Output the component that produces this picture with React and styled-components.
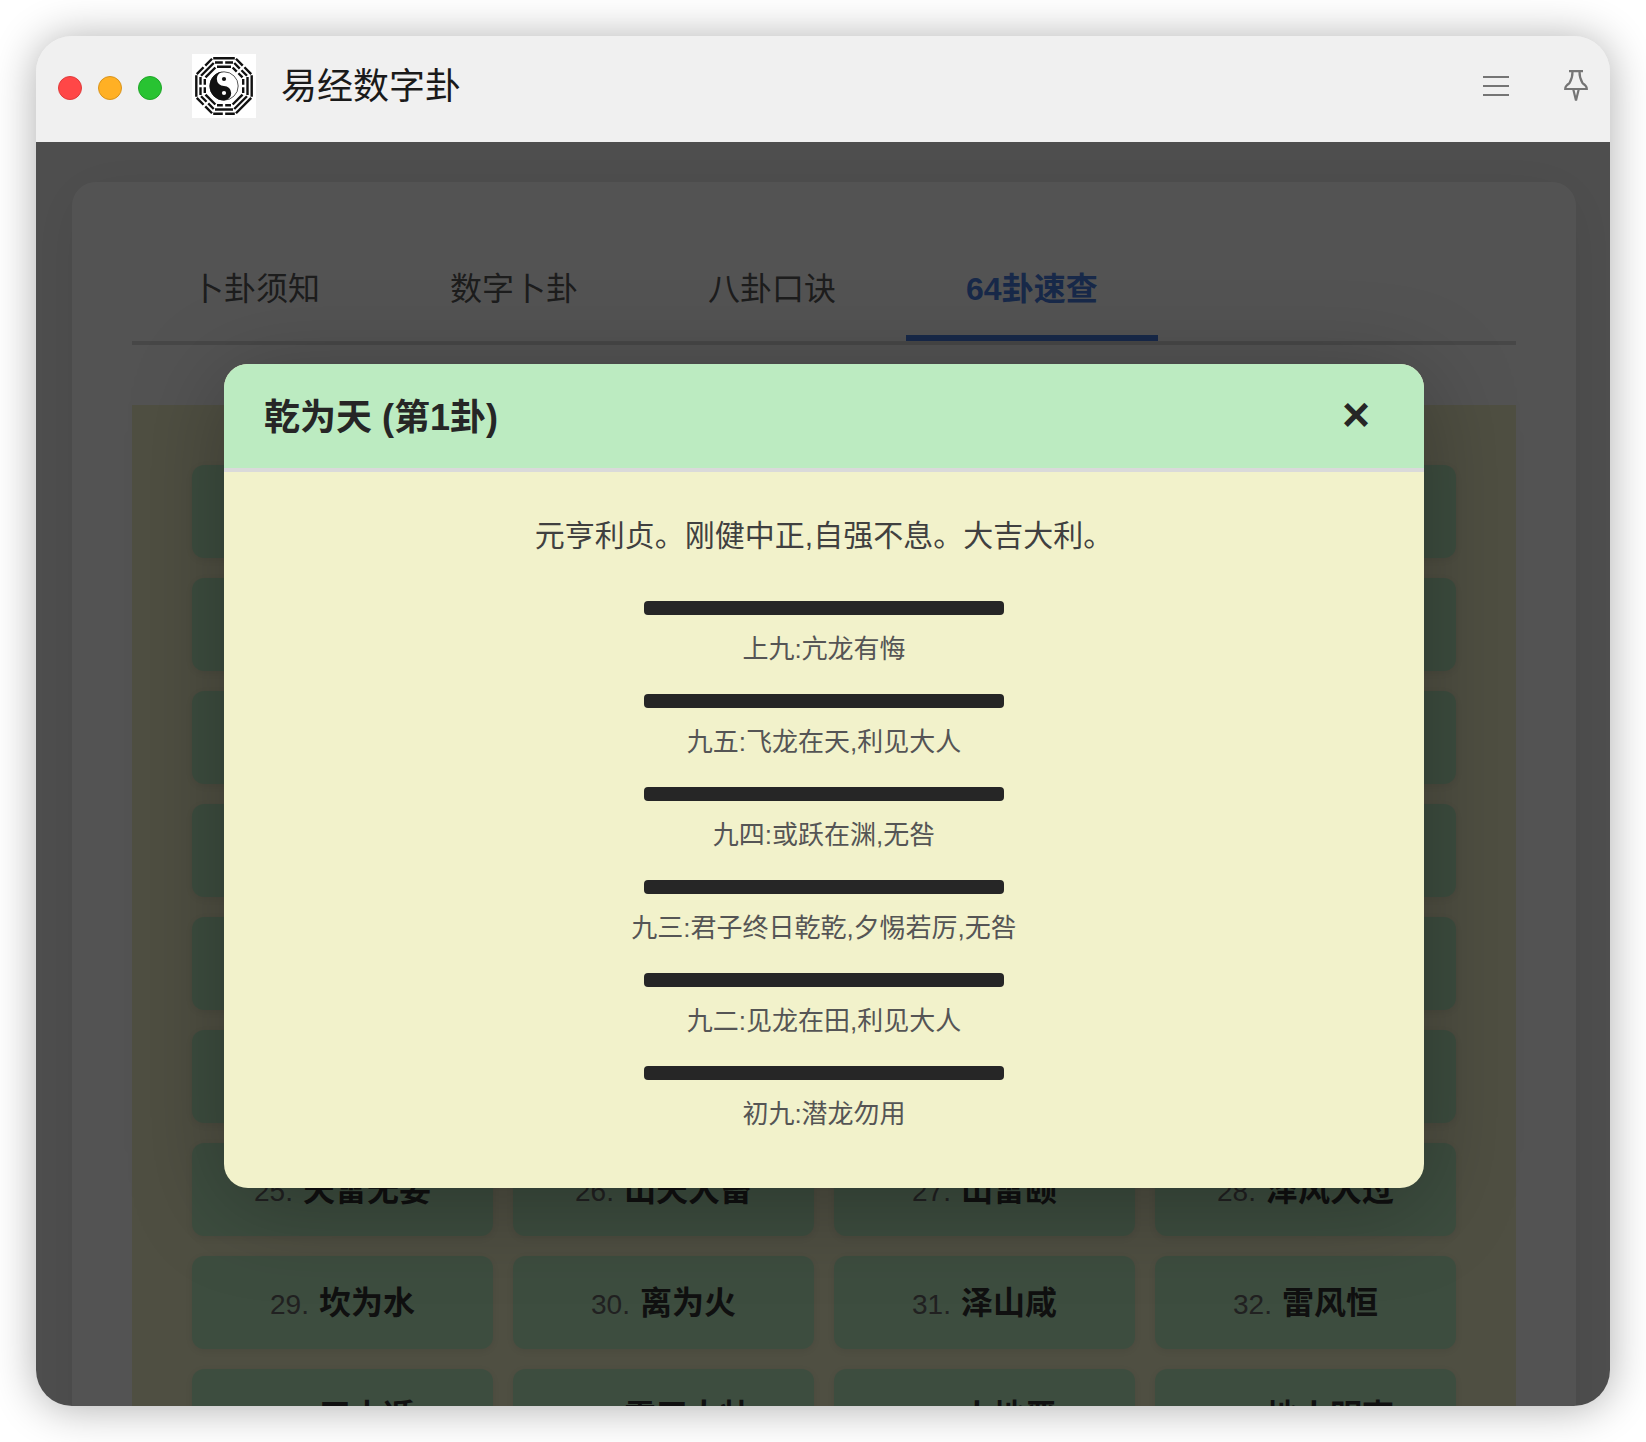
import React, { useState } from 'react';
import styled, { createGlobalStyle } from 'styled-components';

const tabs = ['卜卦须知', '数字卜卦', '八卦口诀', '64卦速查'];

const hexagrams = [
    '乾为天', '坤为地', '水雷屯', '山水蒙',
    '水天需', '天水讼', '地水师', '水地比',
    '风天小畜', '天泽履', '地天泰', '天地否',
    '天火同人', '火天大有', '地山谦', '雷地豫',
    '泽雷随', '山风蛊', '地泽临', '风地观',
    '火雷噬嗑', '山火贲', '山地剥', '地雷复',
    '天雷无妄', '山天大畜', '山雷颐', '泽风大过',
    '坎为水', '离为火', '泽山咸', '雷风恒',
    '天山遁', '雷天大壮', '火地晋', '地火明夷',
];

const yaoLines = [
    '上九:亢龙有悔',
    '九五:飞龙在天,利见大人',
    '九四:或跃在渊,无咎',
    '九三:君子终日乾乾,夕惕若厉,无咎',
    '九二:见龙在田,利见大人',
    '初九:潜龙勿用',
];

// trigrams clockwise from the top, outer line first (1 = solid, 0 = broken)
const trigrams = [
    [1, 0, 1], [0, 0, 0], [1, 1, 0], [1, 1, 1],
    [0, 1, 0], [0, 0, 1], [1, 0, 0], [0, 1, 1],
];

const BaguaLogo = () => {
    const rings = [
        { r: 27.7, half: 10.8 },
        { r: 23.5, half: 9 },
        { r: 19.2, half: 7 },
    ];

    const renderTrigram = (lines, side) => (
        <g key={side} transform={`rotate(${side * 45})`}>
            {lines.map((solid, i) => {
                const { r, half } = rings[i];
                return solid
                    ? <path key={i} d={`M${-half} ${-r}H${half}`} />
                    : <path key={i} d={`M${-half} ${-r}H-1.2M1.2 ${-r}H${half}`} />
            })}
        </g>
    )

    return (
        <Logo viewBox="-32 -32 64 64">
            <g stroke="#111" strokeWidth="2.4" fill="none">
                {trigrams.map(renderTrigram)}
            </g>
            <circle r="14.2" fill="#fff" stroke="#111" strokeWidth="0.7" />
            <path d="M0 -14.4A14.4 14.4 0 0 0 0 14.4A7.2 7.2 0 0 0 0 0A7.2 7.2 0 0 1 0 -14.4Z" fill="#111" />
            <circle cy="-7" r="2.1" fill="#111" />
            <circle cy="7" r="2.1" fill="#fff" />
        </Logo>
    )
}

const App = () => {
    const [active, setActive] = useState(3)
    const [open, setOpen] = useState(true)

    return (
        <Desktop>
            <GlobalStyle />
            <Window>
                <TitleBar>
                    <Light color="#ff4747" edge="#e03b3b" />
                    <Light color="#ffb024" edge="#d9941c" />
                    <Light color="#28c332" edge="#1fa628" />
                    <BaguaLogo />
                    <AppName>易经数字卦</AppName>
                    <MenuIcon viewBox="0 0 26 32">
                        <path d="M0 7H26M0 16H26M0 25H26" />
                    </MenuIcon>
                    <PinIcon viewBox="0 0 24 32">
                        <path d="M5 1.2H19M8.5 1.5C8.7 6 7.2 10 5.4 13.3C3 14.8 1.2 16.5 1.2 19H22.800C22.800 16.500 21 14.800 18.600 13.300C16.800 10 15.300 6 15.500 1.500M9.200 19L12 30.500L14.800 19" />
                    </PinIcon>
                </TitleBar>

                <Page>
                    <Card>
                        <TabBar>
                            {tabs.map((tab, index) => (
                                <Tab key={tab} $active={index === active} onClick={() => setActive(index)}>{tab}</Tab>
                            ))}
                        </TabBar>
                        <Grid>
                            {hexagrams.map((name, index) => (
                                <Cell key={name} onClick={() => setOpen(true)}>
                                    <CellNumber>{index + 1}.</CellNumber>
                                    <CellName>{name}</CellName>
                                </Cell>
                            ))}
                        </Grid>
                    </Card>
                </Page>

                {open && (
                    <Overlay>
                        <Modal>
                            <ModalHeader>
                                <ModalTitle>乾为天 (第1卦)</ModalTitle>
                                <CloseButton onClick={() => setOpen(false)}>×</CloseButton>
                            </ModalHeader>
                            <ModalBody>
                                <Summary>元亨利贞。刚健中正,自强不息。大吉大利。</Summary>
                                {yaoLines.map((text) => (
                                    <Yao key={text}>
                                        <YaoBar />
                                        <YaoText>{text}</YaoText>
                                    </Yao>
                                ))}
                            </ModalBody>
                        </Modal>
                    </Overlay>
                )}
            </Window>
        </Desktop>
    )
}

const GlobalStyle = createGlobalStyle`
  * {
    box-sizing: border-box;
  }
  body {
    margin: 0;
    background: #fff;
    font-family: "Liberation Sans", "Noto Sans CJK SC", sans-serif;
  }
`;

const Desktop = styled.div`
  height: 1442px;
  padding: 36px;
  overflow: hidden;
`;

const Window = styled.div`
  position: relative;
  display: flex;
  flex-direction: column;
  width: 1574px;
  height: 1370px;
  border-radius: 36px;
  overflow: hidden;
  background: #f0f0f0;
  box-shadow: 0 2px 44px rgba(0, 0, 0, 0.32);
`;

const TitleBar = styled.div`
  display: flex;
  align-items: center;
  flex: none;
  height: 106px;
  padding: 0 22px 6px;
  background: #f0f0f0;
`;

const Light = styled.span`
  width: 24px;
  height: 24px;
  margin: 4px 16px 0 0;
  border: 1px solid ${({ edge }) => edge};
  border-radius: 50%;
  background: ${({ color }) => color};
`;

const Logo = styled.svg`
  width: 64px;
  height: 64px;
  margin-left: 14px;
  background: #fff;
`;

const AppName = styled.h1`
  flex: 1;
  margin: 2px 0 0 25px;
  font-size: 36px;
  font-weight: 400;
  line-height: 52px;
  color: #1a1a1a;
`;

const MenuIcon = styled.svg`
  width: 26px;
  height: 32px;
  margin-right: 55px;
  fill: none;
  stroke: #757575;
  stroke-width: 2.2;
`;

const PinIcon = styled(MenuIcon)`
  width: 24px;
  margin-right: 0;
`;

const Page = styled.div`
  flex: 1;
  min-height: 0;
  padding: 40px 34px 0 36px;
  overflow: hidden;
  background: #f0f0f0;
`;

const Card = styled.div`
  padding: 60px;
  border-radius: 24px;
  background: #fff;
  box-shadow: 0 8px 60px rgba(0, 0, 0, 0.08);
`;

const TabBar = styled.div`
  display: flex;
  gap: 10px;
  height: 103px;
  margin-bottom: 60px;
  border-bottom: 4px solid #dadada;
`;

const Tab = styled.div`
  padding: 23px 60px 0;
  border-bottom: 6px solid ${({ $active }) => ($active ? '#4a7ee0' : 'transparent')};
  font-size: 32px;
  font-weight: ${({ $active }) => ($active ? 700 : 400)};
  line-height: 48px;
  color: ${({ $active }) => ($active ? '#4a7ee0' : '#595959')};
  cursor: pointer;
`;

const Grid = styled.div`
  display: grid;
  grid-template-columns: repeat(4, 1fr);
  grid-auto-rows: 93px;
  gap: 20px;
  padding: 60px;
  background: #f2f2cb;
`;

const Cell = styled.div`
  display: flex;
  align-items: baseline;
  justify-content: center;
  border-radius: 12px;
  background: #bcebc1;
  box-shadow: 0 2px 10px rgba(0, 0, 0, 0.08);
  line-height: 95px;
  cursor: pointer;
`;

const CellNumber = styled.span`
  margin-right: 10px;
  font-size: 28px;
  color: #666;
`;

const CellName = styled.span`
  font-size: 32px;
  font-weight: 700;
  color: #333;
`;

const Overlay = styled.div`
  position: absolute;
  inset: 106px 0 0;
  display: flex;
  align-items: center;
  justify-content: center;
  padding: 4px 0 0 2px;
  background: rgba(0, 0, 0, 0.675);
`;

const Modal = styled.div`
  width: 1200px;
  height: 824px;
  border-radius: 24px;
  overflow: hidden;
  background: #f2f2cb;
  box-shadow: 0 16px 96px rgba(0, 0, 0, 0.28);
`;

const ModalHeader = styled.div`
  display: flex;
  align-items: center;
  justify-content: space-between;
  height: 108px;
  padding: 0 40px;
  border-bottom: 4px solid #dadada;
  background: #bcebc1;
`;

const ModalTitle = styled.h2`
  margin: 4px 0 0;
  font-size: 36px;
  line-height: 54px;
  color: #262626;
`;

const CloseButton = styled.button`
  width: 56px;
  margin-bottom: 2px;
  padding: 0;
  border: 0;
  background: none;
  font-family: inherit;
  font-size: 48px;
  font-weight: 700;
  line-height: 56px;
  color: #262626;
  cursor: pointer;
`;

const ModalBody = styled.div`
  display: flex;
  flex-direction: column;
  align-items: center;
  padding-top: 40px;
`;

const Summary = styled.p`
  margin: 0 0 41px;
  font-size: 30px;
  line-height: 48px;
  color: #404040;
`;

const Yao = styled.div`
  display: flex;
  flex-direction: column;
  align-items: center;
  height: 93px;
`;

const YaoBar = styled.div`
  width: 360px;
  height: 14px;
  margin-bottom: 15px;
  border-radius: 4px;
  background: #262626;
`;

const YaoText = styled.div`
  font-size: 26px;
  line-height: 39px;
  color: #555;
`;

export default App;
